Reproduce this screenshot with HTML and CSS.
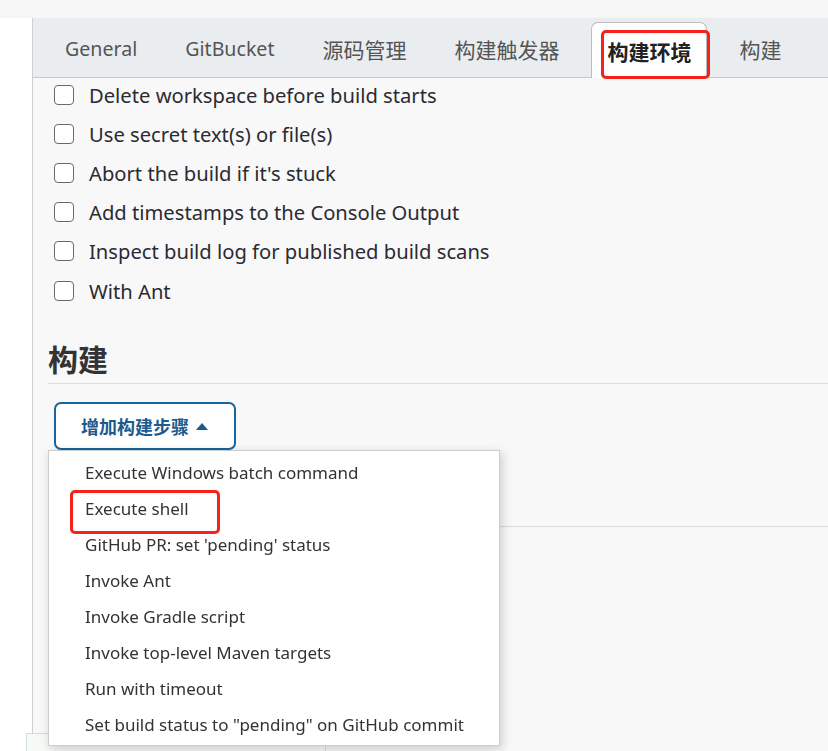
FILE: index.html
```html
<!DOCTYPE html>
<html>
<head>
    <title>构建环境</title>
    <meta name="viewport" content="width=device-width, initial-scale=1.0">
    <link rel="stylesheet" href="styles.css">
</head>
<body>
    <div class="top-strip"></div>

    <div class="page">
        <div class="side"></div>

        <div class="main">
            <div class="tabs">
                <div class="tab">General</div>
                <div class="tab">GitBucket</div>
                <div class="tab cjk">源码管理</div>
                <div class="tab cjk">构建触发器</div>
                <div class="tab cjk active">
                    构建环境
                    <span class="mark mark-tab"></span>
                </div>
                <div class="tab cjk">构建</div>
            </div>

            <div class="options">
                <label class="option"><span class="box"></span>Delete workspace before build starts</label>
                <label class="option"><span class="box"></span>Use secret text(s) or file(s)</label>
                <label class="option"><span class="box"></span>Abort the build if it's stuck</label>
                <label class="option"><span class="box"></span>Add timestamps to the Console Output</label>
                <label class="option"><span class="box"></span>Inspect build log for published build scans</label>
                <label class="option"><span class="box"></span>With Ant</label>
            </div>

            <div class="section">
                <h2 class="section-title">构建</h2>

                <div class="add-step">
                    <button class="add-btn">增加构建步骤 <span class="caret"></span></button>

                    <ul class="menu">
                        <li>Execute Windows batch command</li>
                        <li>Execute shell<span class="mark mark-item"></span></li>
                        <li>GitHub PR: set 'pending' status</li>
                        <li>Invoke Ant</li>
                        <li>Invoke Gradle script</li>
                        <li>Invoke top-level Maven targets</li>
                        <li>Run with timeout</li>
                        <li>Set build status to "pending" on GitHub commit</li>
                    </ul>
                </div>

                <div class="next-section"></div>
            </div>
        </div>
    </div>

    <div class="save-bar"></div>
</body>
</html>
```

FILE: styles.css
```css
* {
    box-sizing: border-box;
    margin: 0;
    padding: 0;
}

body {
    background: #fff;
    color: #2b2b33;
    font-family: "Noto Sans", "Noto Sans CJK SC", sans-serif;
    overflow: hidden;
    height: 751px;
}

.top-strip {
    height: 18px;
    background: #f6f6f6;
}

.page {
    display: flex;
    height: 733px;
}

.side {
    width: 32px;
    background: #fff;
}

.main {
    flex: 1;
    background: #f8f8f8;
    border-left: 1px solid #cfcfcf;
}

/* tab bar */
.tabs {
    display: flex;
    align-items: flex-end;
    gap: 16px;
    height: 60px;
    padding-left: 16px;
    background: #e9edf0;
    border-bottom: 1px solid #c8c8c8;
}

.tab {
    position: relative;
    height: 56px;
    padding: 0 16px;
    font-size: 19.6px;
    color: #555;
    line-height: 56px;
    white-space: nowrap;
}

.tab.cjk {
    font-family: "Noto Sans CJK SC", sans-serif;
    font-size: 21px;
}

.tab.active {
    background: #fff;
    color: #222;
    font-weight: bold;
    border: 1px solid #bdbdbd;
    border-bottom: none;
    border-radius: 7px 7px 0 0;
    margin-bottom: -1px;
    padding: 0 15px;
}

/* red annotation boxes */
.mark {
    position: absolute;
    border: 3px solid #f5221b;
    border-radius: 5px;
    pointer-events: none;
}

.mark-tab {
    left: 9px;
    right: -4px;
    top: 7px;
    bottom: -1px;
}

.mark-item {
    left: -15px;
    top: -1px;
    width: 150px;
    height: 44px;
}

/* checkbox options */
.options {
    margin-top: -3px;
    padding-left: 21px;
}

.option {
    display: flex;
    align-items: center;
    gap: 15px;
    height: 39.2px;
    font-size: 20.2px;
}

.box {
    width: 20px;
    height: 20px;
    border: 1.5px solid #6b6b6b;
    border-radius: 4px;
    background: #fff;
    flex-shrink: 0;
}

/* build section */
.section {
    padding: 28px 0 0 15px;
}

.section-title {
    font-family: "Noto Sans CJK SC", sans-serif;
    font-size: 30px;
    font-weight: bold;
    color: #333;
    line-height: 40px;
    padding-bottom: 5px;
    border-bottom: 1px solid #dcdcdc;
}

.add-step {
    position: relative;
    padding: 18px 0 0 6px;
}

.add-btn {
    display: flex;
    align-items: center;
    gap: 7px;
    width: 182px;
    height: 48px;
    padding-left: 25px;
    background: #fff;
    border: 2px solid #1565a0;
    border-radius: 7px;
    color: #1b5a8e;
    font-family: "Noto Sans CJK SC", sans-serif;
    font-size: 18px;
    font-weight: bold;
}

.caret {
    width: 0;
    height: 0;
    border-left: 6.5px solid transparent;
    border-right: 6.5px solid transparent;
    border-bottom: 7px solid #1b5a8e;
}

.menu {
    position: absolute;
    left: 0;
    top: 66px;
    width: 452px;
    list-style: none;
    background: #fff;
    border: 1px solid #cdcdcd;
    box-shadow: 2px 3px 10px rgba(0, 0, 0, 0.18);
    padding: 4px 0 2px 36px;
    z-index: 5;
}

.menu li {
    position: relative;
    height: 36px;
    line-height: 36px;
    font-size: 17px;
    color: #333;
    white-space: nowrap;
}

.next-section {
    height: 77px;
    border-bottom: 1px solid #dcdcdc;
}

.save-bar {
    position: fixed;
    left: 26px;
    bottom: 0;
    width: 300px;
    height: 18px;
    background: #f6faf7;
    border: 1px solid #cce2d4;
    border-bottom: none;
}
```
